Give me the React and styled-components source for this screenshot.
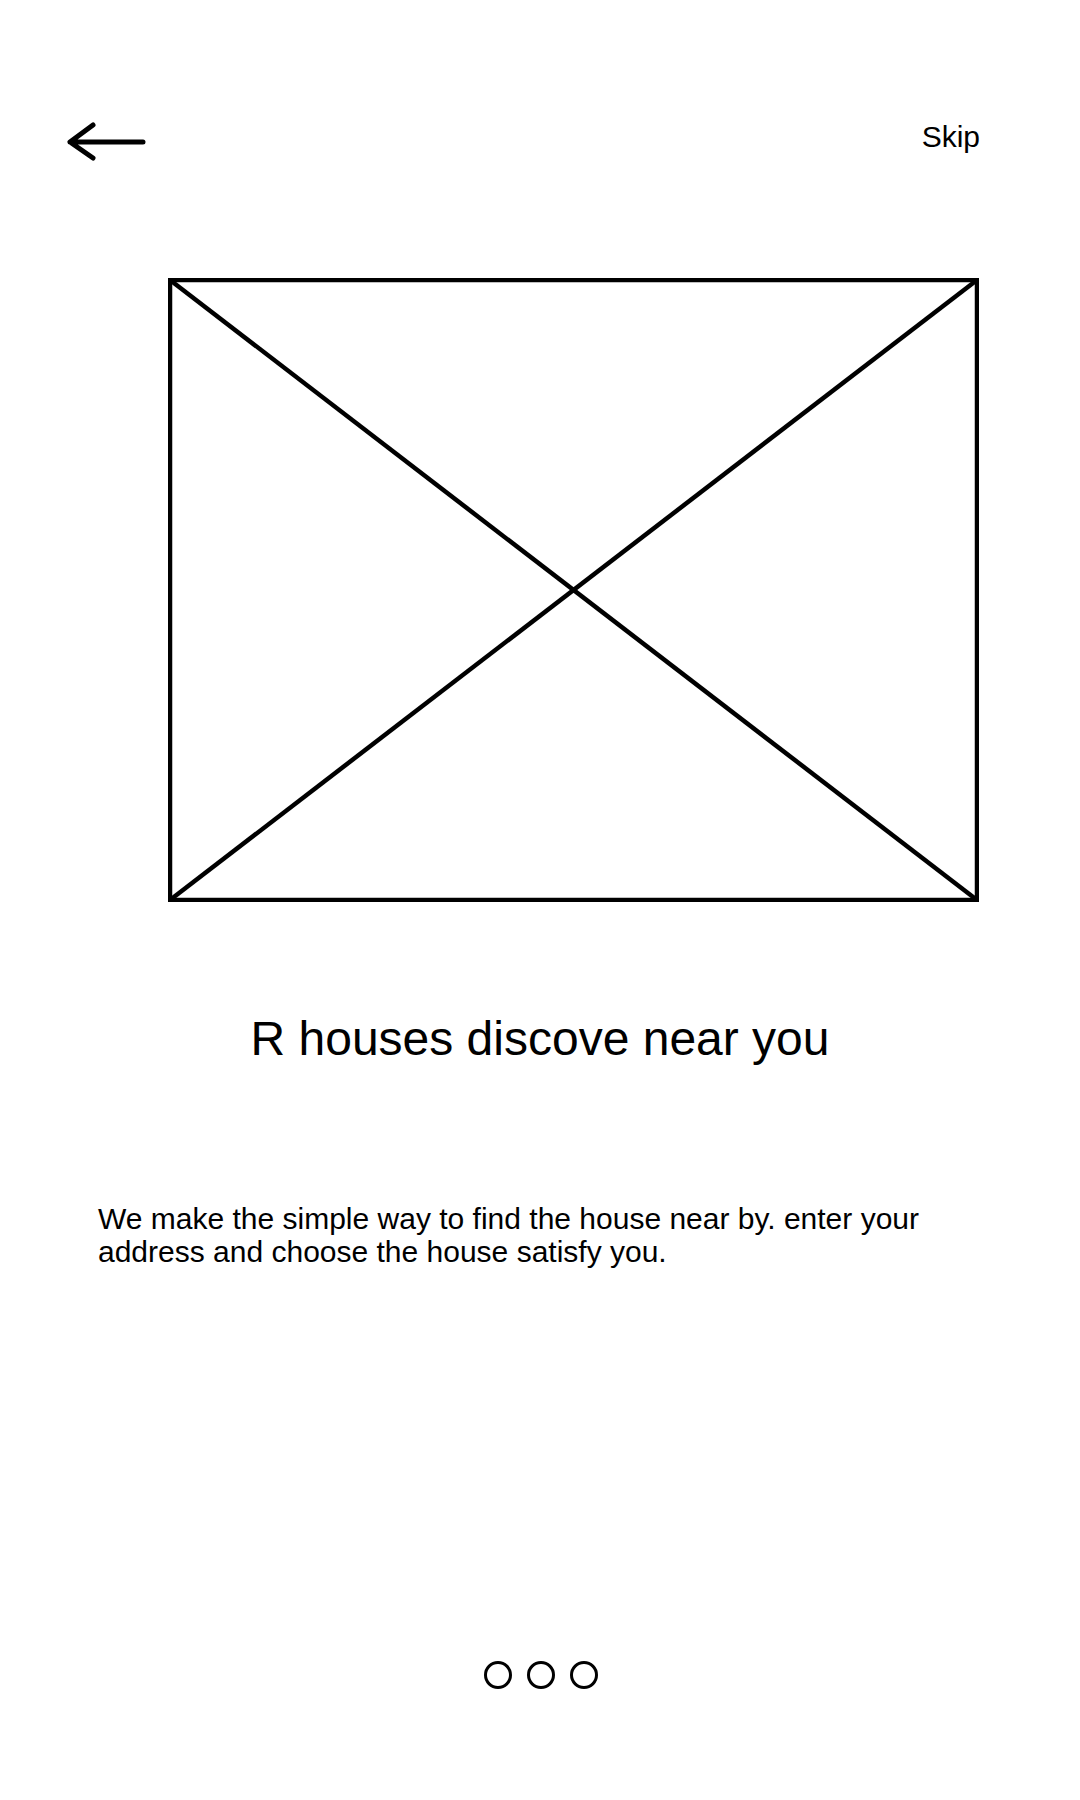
import React from "react";
import styled, { createGlobalStyle } from "styled-components";

const GlobalStyle = createGlobalStyle`
  html, body {
    margin: 0;
    padding: 0;
    background: #ffffff;
  }
  body {
    font-family: "Liberation Sans", Arial, sans-serif;
    color: #000;
  }
`;

const Screen = styled.div`
  width: 1080px;
  min-height: 1800px;
  background: #fff;
  display: flex;
  flex-direction: column;
`;

const Header = styled.header`
  display: flex;
  justify-content: space-between;
  align-items: flex-start;
  padding: 119px 100px 0 66px;
`;

const BackButton = styled.button`
  border: none;
  background: none;
  padding: 0;
  margin: 2px 0 0 0;
  width: 82px;
  height: 42px;
  cursor: pointer;
  display: block;
  svg { display: block; }
`;

const SkipLink = styled.span`
  margin-top: 2px;
  font-family: "Liberation Sans", Arial, sans-serif;
  font-size: 30px;
  line-height: 32px;
  color: #000;
`;

const Placeholder = styled.div`
  margin: 115px 0 0 168px;
  width: 811px;
  height: 624px;
  svg { display: block; }
`;

const Title = styled.h1`
  margin: 109px 0 0;
  font-family: "Liberation Sans", Arial, sans-serif;
  font-weight: 400;
  font-size: 48px;
  line-height: 56px;
  text-align: center;
  color: #000;
`;

const Description = styled.p`
  margin: 135px 0 0;
  padding: 0 98px;
  font-family: "Liberation Sans", Arial, sans-serif;
  font-size: 30px;
  line-height: 33px;
  color: #000;
`;

const Pager = styled.div`
  margin-top: 393px;
  display: flex;
  justify-content: center;
  gap: 15px;
  padding-left: 2px;
`;

const Dot = styled.span`
  box-sizing: border-box;
  width: 28px;
  height: 28px;
  border-radius: 50%;
  border: 3px solid #000;
  background: ${(p) => (p.$active ? "#000" : "transparent")};
`;

export default function App() {
  return (
    <>
      <GlobalStyle />
      <Screen>
        <Header>
          <BackButton aria-label="Back">
            <svg width="82" height="42" viewBox="0 0 82 42">
              <path
                d="M27 4 L4 21 L27 37 M4 21 L77 21"
                fill="none"
                stroke="#000"
                strokeWidth="5"
                strokeLinecap="round"
                strokeLinejoin="round"
              />
            </svg>
          </BackButton>
          <SkipLink>Skip</SkipLink>
        </Header>
        <Placeholder>
          <svg width="811" height="624" viewBox="0 0 811 624">
            <rect x="2" y="2" width="807" height="620" fill="none" stroke="#000" strokeWidth="4.5" />
            <line x1="2" y1="2" x2="809" y2="622" stroke="#000" strokeWidth="4.5" />
            <line x1="809" y1="2" x2="2" y2="622" stroke="#000" strokeWidth="4.5" />
          </svg>
        </Placeholder>
        <Title>R houses discove near you</Title>
        <Description>
          We make the simple way to find the house near by. enter your address and choose the house satisfy you.
        </Description>
        <Pager>
          <Dot />
          <Dot />
          <Dot />
        </Pager>
      </Screen>
    </>
  );
}
